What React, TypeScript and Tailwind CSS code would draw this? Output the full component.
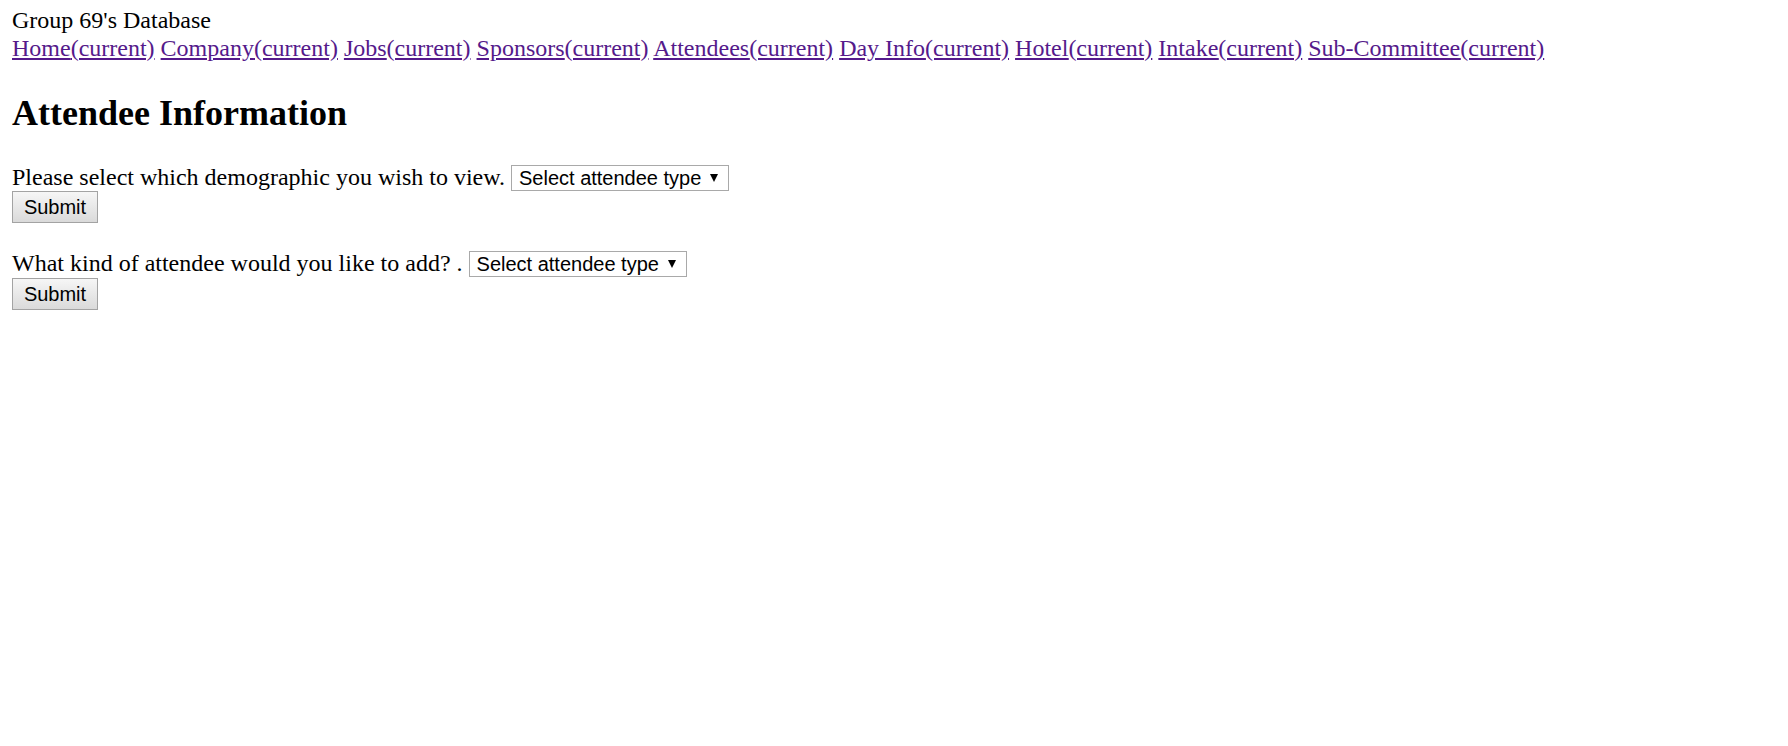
import React from "react";

const links = [
  "Home",
  "Company",
  "Jobs",
  "Sponsors",
  "Attendees",
  "Day Info",
  "Hotel",
  "Intake",
  "Sub-Committee",
];

function FakeSelect() {
  return (
    <span className="inline-flex h-[26px] w-[218px] box-border items-center justify-between border border-[#a9a9a9] bg-white pl-[7px] pr-[10px] align-baseline font-['Liberation_Sans',Arial,sans-serif] text-[20px] leading-[24px] text-black">
      <span>Select attendee type</span>
      <svg width="8" height="8" viewBox="0 0 8 8" aria-hidden="true">
        <polygon points="0,0 8,0 4,8" fill="#000" />
      </svg>
    </span>
  );
}

function SubmitButton() {
  return (
    <button
      type="button"
      className="block h-[32px] w-[86px] box-border border border-[#a3a3a3] bg-linear-to-b from-[#f6f6f6] to-[#dadada] font-['Liberation_Sans',Arial,sans-serif] text-[20px] leading-[24px] text-black"
    >
      Submit
    </button>
  );
}

export default function App() {
  return (
    <div className="min-h-screen bg-white pl-[12px] pt-[7px] font-['Liberation_Serif','Times_New_Roman',serif] text-[24px] leading-[27.6px] text-black">
      <div>Group 69's Database</div>
      <nav>
        {links.map((l, i) => (
          <React.Fragment key={l}>
            <a href="#" className="text-[#551a8b] underline">
              {l}
              <span>(current)</span>
            </a>
            {i < links.length - 1 ? " " : null}
          </React.Fragment>
        ))}
      </nav>
      <h2 className="mt-[31px] mb-[29px] text-[36px] font-bold leading-[41.4px]">
        Attendee Information
      </h2>
      <form className="mb-[27px]">
        <div>
          Please select which demographic you wish to view. <FakeSelect />
        </div>
        <SubmitButton />
      </form>
      <form>
        <div>
          What kind of attendee would you like to add? . <FakeSelect />
        </div>
        <SubmitButton />
      </form>
    </div>
  );
}
